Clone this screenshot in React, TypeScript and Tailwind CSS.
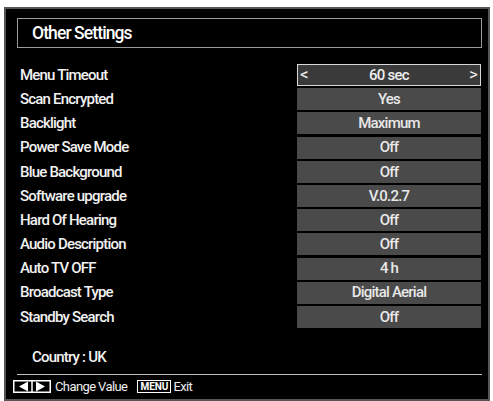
const rows: { label: string; value: string }[] = [
  { label: "Menu Timeout", value: "60 sec" },
  { label: "Scan Encrypted", value: "Yes" },
  { label: "Backlight", value: "Maximum" },
  { label: "Power Save Mode", value: "Off" },
  { label: "Blue Background", value: "Off" },
  { label: "Software upgrade", value: "V.0.2.7" },
  { label: "Hard Of Hearing", value: "Off" },
  { label: "Audio Description", value: "Off" },
  { label: "Auto TV OFF", value: "4 h" },
  { label: "Broadcast Type", value: "Digital Aerial" },
  { label: "Standby Search", value: "Off" },
];

const font = {
  fontFamily: '"Roboto", "Liberation Sans", sans-serif',
};

const ArrowKeys = () => (
  <svg width="38" height="13" viewBox="0 0 38 13">
    <rect x="0.75" y="0.75" width="36.5" height="11.5" fill="#000" stroke="#fff" strokeWidth="1.5" />
    <line x1="19" y1="0.75" x2="19" y2="12.25" stroke="#fff" strokeWidth="1.5" />
    <polygon points="6,6.5 15,1.5 15,11.5" fill="#fff" />
    <polygon points="32,6.5 23,1.5 23,11.5" fill="#fff" />
  </svg>
);

export default function App() {
  return (
    <div className="w-[493px] h-[401px] bg-white overflow-hidden" style={font}>
      <div className="ml-[4px] mt-[7px] w-[486px] h-[394px] border-2 border-[#555] bg-black pl-[11px] pt-[9px] flex flex-col">
        <div className="w-[465px] h-[30px] border-[1.5px] border-[#9a9a9a] flex items-center pl-[14px]">
          <span className="text-[17.5px] font-medium tracking-[-0.9px] text-white">Other Settings</span>
        </div>

        <div className="mt-[16px] flex flex-col">
          {rows.map((r, i) => (
            <div key={r.label} className="h-[24.2px] flex items-start">
              <span className="pl-[3px] w-[280px] h-[22px] flex items-center text-[15px] font-medium tracking-[-0.8px] text-[#f2f2f2]">
                {r.label}
              </span>
              {i === 0 ? (
                <div className="w-[184px] h-[22px] border-[1.5px] border-[#d8d8d8] bg-[#3a3a3a] flex items-center justify-between px-[2px] text-[15px] font-medium tracking-[-0.8px] text-[#eee]">
                  <span className="text-[17px] font-normal tracking-normal">&lt;</span>
                  <span>{r.value}</span>
                  <span className="text-[17px] font-normal tracking-normal">&gt;</span>
                </div>
              ) : (
                <div className="w-[184px] h-[22px] bg-[#4a4a4a] flex items-center justify-center text-[15px] font-medium tracking-[-0.8px] text-[#e8e8e8]">
                  {r.value}
                </div>
              )}
            </div>
          ))}
        </div>

        <div className="mt-[16px] pl-[15px] text-[15px] font-medium tracking-[-0.8px] text-[#f2f2f2]">Country : UK</div>

        <div className="mt-[5px] w-[465px] h-[1.5px] bg-[#c0c0c0]" />

        <div className="mt-[5px] -ml-[4px] h-[13px] flex items-center text-[13px] tracking-[-0.6px] leading-none text-[#eee]">
          <ArrowKeys />
          <span className="ml-[4px]">Change Value</span>
          <span className="ml-[10px] h-[13px] px-[2px] border-[1.5px] border-white flex items-center text-[10px] font-bold tracking-normal text-white leading-none">
            MENU
          </span>
          <span className="ml-[2px]">Exit</span>
        </div>
      </div>
    </div>
  );
}
